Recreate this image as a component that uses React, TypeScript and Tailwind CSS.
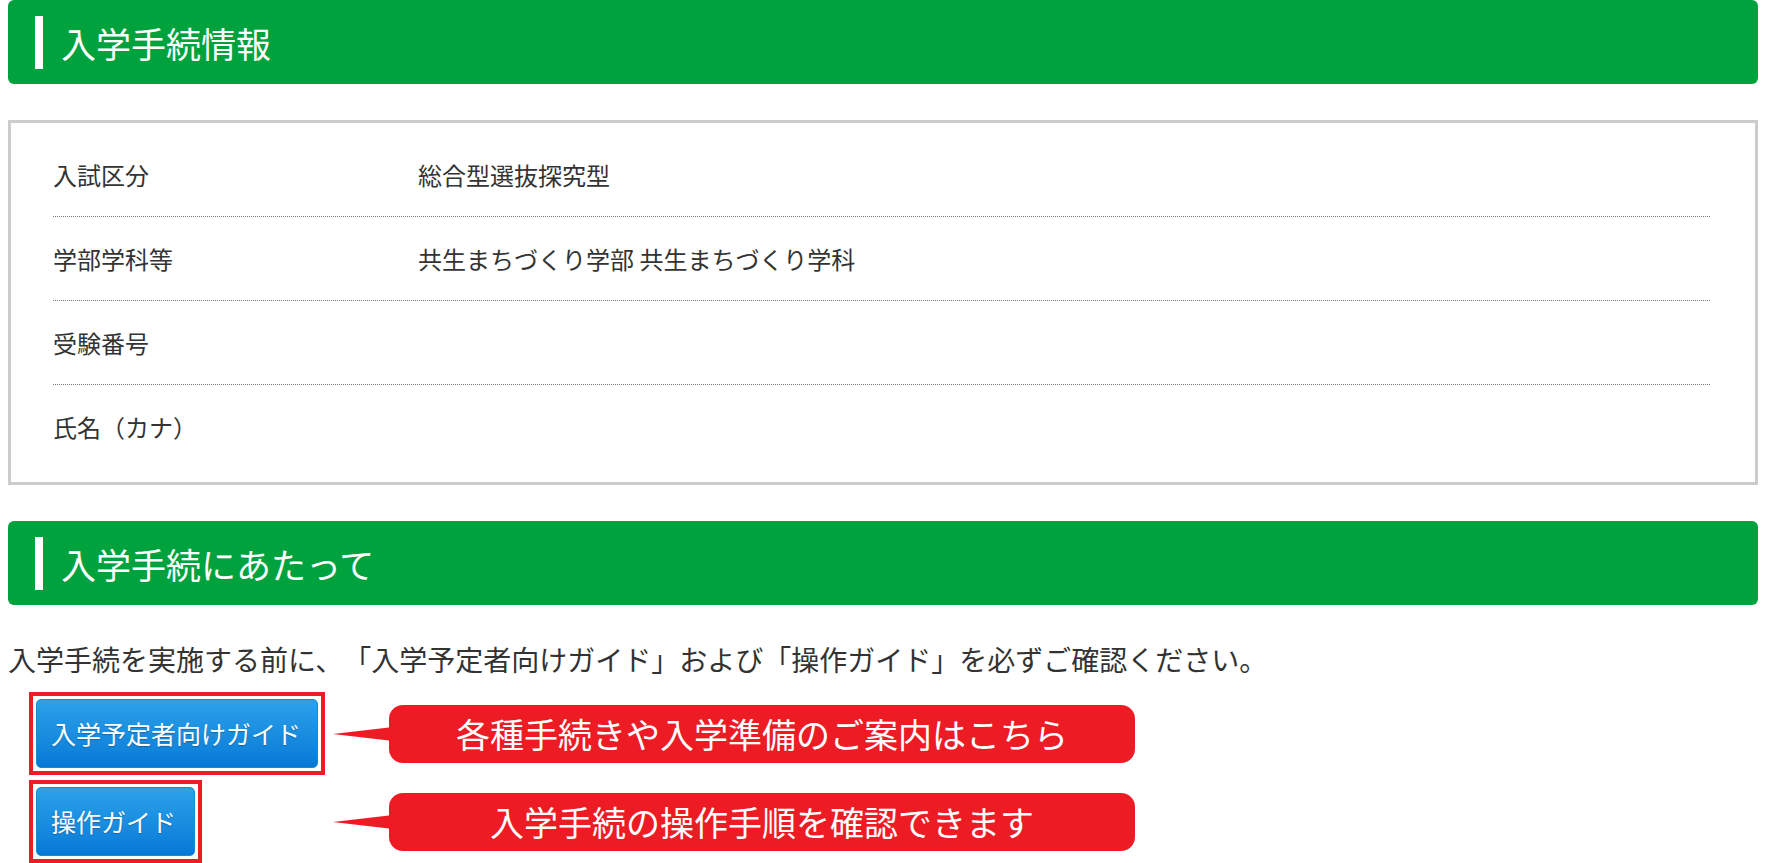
import React, { JSX } from "react";

const rows = [
  { label: "入試区分", value: "総合型選抜探究型" },
  { label: "学部学科等", value: "共生まちづくり学部 共生まちづくり学科" },
  { label: "受験番号", value: "" },
  { label: "氏名（カナ）", value: "" },
];

const SectionHeader = ({ title }: { title: string }): JSX.Element => (
  <div className="flex items-center h-[84px] bg-[#00a23e] rounded-[6px] pl-[27px]">
    <span className="block w-[8px] h-[53px] bg-white mr-[18px]" />
    <h2 className="text-white text-[35px] leading-none font-normal">{title}</h2>
  </div>
);

const Callout = ({ text }: { text: string }): JSX.Element => (
  <div className="relative flex items-center justify-center w-[746px] h-[58px] bg-[#ed1c24] rounded-[14px]">
    {/* pointer */}
    <svg
      className="absolute left-[-56px] top-1/2 -translate-y-1/2"
      width="60"
      height="16"
      viewBox="0 0 60 16"
    >
      <polygon points="0,8 60,1 60,15" fill="#ed1c24" />
    </svg>
    <span className="text-white text-[34px] leading-none">{text}</span>
  </div>
);

const GuideButton = ({ label, width }: { label: string; width: string }): JSX.Element => (
  <div className="border-[4px] border-[#ed1c24] p-[3px] inline-block">
    <button
      className={`${width} h-[69px] flex items-center pl-[14px] rounded-[5px] border border-[#1a86d6] bg-gradient-to-b from-[#2ba2ea] to-[#0679d6] text-white text-[25px] leading-none [text-shadow:0_1px_1px_rgba(0,0,0,0.25)]`}
    >
      {label}
    </button>
  </div>
);

export default function App(): JSX.Element {
  return (
    <div className="w-[1766px] min-h-[863px] bg-white px-[8px] font-['Noto_Sans_CJK_JP','Noto_Sans',sans-serif] text-[#333] [text-spacing-trim:space-all]">
      <SectionHeader title="入学手続情報" />

      {/* Info table */}
      <div className="mt-[36px] border-[3px] border-[#cccccc] pl-[42px] pr-[45px] pt-[10px] pb-[13px]">
        {rows.map((row, index) => (
          <div
            key={index}
            className={`flex items-center h-[84px] text-[24px] ${
              index < rows.length - 1 ? "border-b border-dotted border-[#777777]" : ""
            }`}
          >
            <div className="w-[365px] shrink-0">{row.label}</div>
            <div>{row.value}</div>
          </div>
        ))}
      </div>

      <div className="mt-[36px]">
        <SectionHeader title="入学手続にあたって" />
      </div>

      <p className="mt-[34px] text-[28px] leading-[40px]">
        入学手続を実施する前に、「入学予定者向けガイド」および「操作ガイド」を必ずご確認ください。
      </p>

      <div className="mt-[13px] pl-[21px] flex flex-col gap-[5px]">
        <div className="flex items-center">
          <div className="w-[360px] shrink-0">
            <GuideButton label="入学予定者向けガイド" width="w-[282px]" />
          </div>
          <Callout text="各種手続きや入学準備のご案内はこちら" />
        </div>
        <div className="flex items-center">
          <div className="w-[360px] shrink-0">
            <GuideButton label="操作ガイド" width="w-[159px]" />
          </div>
          <Callout text="入学手続の操作手順を確認できます" />
        </div>
      </div>
    </div>
  );
}
